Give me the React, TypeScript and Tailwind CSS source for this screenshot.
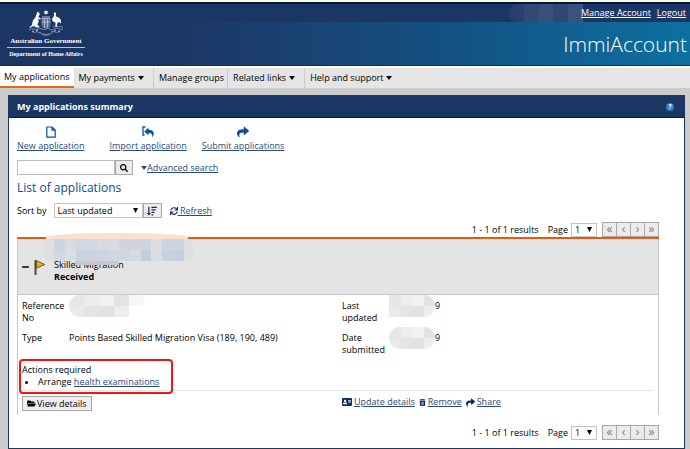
import type { ReactNode } from "react";
import {
    FaAddressCard,
    FaFolderOpen,
    FaMinus,
    FaSearch,
    FaShare,
    FaSortAmountDown,
    FaSync,
    FaTrashAlt,
} from "react-icons/fa";

const menu = [
    { label: "My applications", dropdown: false },
    { label: "My payments", dropdown: true },
    { label: "Manage groups", dropdown: false },
    { label: "Related links", dropdown: true },
    { label: "Help and support", dropdown: true },
];

const pages = [
    { label: "«", title: "First page" },
    { label: "‹", title: "Previous page" },
    { label: "›", title: "Next page" },
    { label: "»", title: "Last page" },
];

const nameTiles = [
    "bg-[#cdd4df]", "bg-[#d8dbe0]", "bg-[#d2d8e1]", "bg-[#d2d8e1]", "bg-[#d6dae1]", "bg-[#d8dbe2]",
    "bg-[#cfd5e0]", "bg-[#cfd5e0]", "bg-[#cbd4e0]", "bg-[#dadde1]", "bg-[#cdd5e1]", "bg-[#cdd5e1]",
    "bg-[#d2d8e1]", "bg-[#dadde1]", "bg-[#c9d2df]", "bg-[#c9d2df]", "bg-[#cbd4e0]", "bg-[#d0d7e1]",
    "bg-[#cfd7e1]", "bg-[#d6dae1]", "bg-[#c3cddd]", "bg-[#dadde1]", "bg-[#c8d1df]", "bg-[#c5cfdd]",
];

const greyTiles = [
    "bg-[#e6e6e8]", "bg-[#ededee]", "bg-[#f1f1f1]", "bg-[#e3e3e6]",
    "bg-[#e9e9e9]", "bg-[#e5e4e5]", "bg-[#e1e1e2]", "bg-[#ededee]",
];

function Caret() {
    return (
        <svg viewBox="0 0 6 4" className="h-1 w-[6px]" aria-hidden="true">
            <path d="M0 0h6L3 4z" fill="currentColor" />
        </svg>
    );
}

function PageIcon() {
    return (
        <svg viewBox="0 0 10 12" className="h-3 w-[10px]" fill="none" stroke="currentColor" strokeWidth="1.2" aria-hidden="true">
            <path d="M.8 1h5.400l3 3v7.200H.8zM6 1v3.200h3.200" />
        </svg>
    );
}

function ImportIcon() {
    return (
        <svg viewBox="0 0 12 12" className="size-3" fill="currentColor" aria-hidden="true">
            <path d="M3.500 1H1v8h1.500" fill="none" stroke="currentColor" strokeWidth="1.300" />
            <path d="M6.500 1.500v2.200c3.300 0 5.300 1.300 5.300 4 0 1.500-.6 2.700-1.500 3.600.4-2.900-.7-4.200-3.800-4.200v2.400L2.300 5.500z" />
        </svg>
    );
}

function Crest() {
    return (
        <svg viewBox="0 0 36 26" className="h-[26px] w-9" fill="#dfe5f0" aria-hidden="true">
            <path d="M18 0l.7 1.4 1.5-.3-.8 1.3.9 1.3-1.6-.1L18 5l-.7-1.4-1.6.1.9-1.3-.8-1.3 1.5.3z" fill="#fff" />
            <path d="M14 6.5h8v1h-8z" opacity=".8" />
            <path d="M13.5 8.5h9v6.500c0 2-2 3.200-4.500 4-2.500-.8-4.500-2-4.500-4z" opacity=".35" />
            <path d="M13.5 8.5h9M13.5 12h9M16.5 8.5v9M19.5 8.5v9" fill="none" stroke="#d5dcea" strokeWidth=".6" />
            {/* kangaroo */}
            <path
                d="M9.500 1.500l.8 1.200.9-1v2l.9 1.100-1.300.6-.2 1.800 2.200 1.300-.3 1-2.200-.8.400 3.300-1.400 2.500 2.200 2.200-.3.800-4-.500-.3-1.300-2.300.2-1.800 1.800-1-.400 2.400-2.800c0-3 .8-5 2.900-6.600z"
                fill="#fff"
            />
            {/* emu */}
            <path
                d="M25.500 3.200l1.500-.9 1 .8-.2 3.400c3 .4 4.700 2 5.200 4.200l.2 3-1.800-1.700-2 .9-.6 3.300 1.400.8h-3l.4-4.200-2.600-1.200c-1.400-1.600-1.200-3.600.8-5l.4-2.600z"
                fill="#fff"
            />
            <g fill="none" stroke="#8c9cbd" strokeWidth=".8">
                <path d="M3 17c3-2 5 2 8 0M1 20c3-3 6 1 9-1s5 2 8 0 5 3 8 0 6 2 9 0" />
                <path d="M25 17c2-2 5 1 8-1M6 23c3-3 5 1 7-1M23 22c3-2 5 2 7 0" />
                <path d="M11 22.5c4 2.5 10 2.5 14 0M14 24.5c3 1 5 1 8 0" />
            </g>
            <g fill="#a3b0cb">
                <circle cx="2" cy="17" r=".8" />
                <circle cx="5" cy="21.5" r="1" />
                <circle cx="9" cy="20.5" r="1" />
                <circle cx="27" cy="20.5" r="1" />
                <circle cx="31" cy="21.5" r="1" />
                <circle cx="34" cy="17" r=".8" />
            </g>
        </svg>
    );
}

function Flag() {
    return (
        <svg viewBox="0 0 12 16" className="h-4 w-3" aria-hidden="true">
            <path d="M1.5 1v15" stroke="#554a36" strokeWidth="2" />
            <path d="M2.5 1.7L10.5 5.5 2.5 9.3z" fill="#f7a823" stroke="#6b5524" strokeWidth="1" />
        </svg>
    );
}

type SelectProps = { id: string; value: string; className: string };

function Select({ id, value, className }: SelectProps) {
    return (
        <span className={`relative flex items-center ${className}`}>
            <select id={id} className="h-full w-full appearance-none border border-[#c4c4c4] bg-white pl-[3px]">
                <option>{value}</option>
            </select>
            <svg viewBox="0 0 6 6" className="pointer-events-none absolute right-[5px] size-[5px]" aria-hidden="true">
                <path d="M0 0h6L3 6z" />
            </svg>
        </span>
    );
}

function Pagination({ id }: { id: string }) {
    return (
        <div className="flex h-[15px] items-center justify-end">
            <span className="mr-[9px]">1 - 1 of 1 results</span>
            <label htmlFor={id} className="mr-[3px]">Page</label>
            <Select id={id} value="1" className="mr-[5px] h-[14px] w-[26px]" />
            <div className="flex">
                {pages.map((page) => (
                    <button
                        key={page.title}
                        title={page.title}
                        className="flex h-[15px] w-[15px] items-center justify-center border border-[#a8a8a8] bg-[#ebebeb] pb-[2px] text-[12px] leading-none text-[#777] not-first:-ml-px"
                    >
                        {page.label}
                    </button>
                ))}
            </div>
        </div>
    );
}

function GreyPatch({ className }: { className: string }) {
    return (
        <span className={`grid h-[22px] grid-cols-4 overflow-hidden ${className}`}>
            {greyTiles.map((tile, i) => (
                <span key={i} className={tile} />
            ))}
        </span>
    );
}

function Shortcut({ icon, children }: { icon: ReactNode; children: string }) {
    return (
        <a href="#" className="flex flex-col items-center gap-[2px] text-[#2a4a7c]">
            <span className="flex h-3 items-center text-[#0b4ea2]">{icon}</span>
            <span className="underline">{children}</span>
        </a>
    );
}

function Header() {
    return (
        <header className="relative flex h-16 flex-col border-t-2 border-b border-[#00145c] border-b-[#04306c] bg-[#1c3664] text-white">
            <div className="flex h-[18px] items-center justify-end gap-[6px] pr-1 font-medium">
                <span className="-mr-2 grid h-[18px] w-[74px] grid-cols-5 overflow-hidden rounded-l-full rounded-r-lg">
                    <span className="bg-[#27406c]" />
                    <span className="bg-[#314a73]" />
                    <span className="bg-[#3a5079]" />
                    <span className="bg-[#2f4873]" />
                    <span className="bg-[#3b527c]" />
                </span>
                <a href="#" className="underline">Manage Account</a>
                <a href="#" className="underline">Logout</a>
            </div>
            <div className="flex flex-1 items-center justify-end bg-linear-to-r from-[#1c3664] from-25% via-[#125182] via-65% to-[#0d70a0] pr-[3px]">
                <h1 className="text-[21px] leading-6 font-light">ImmiAccount</h1>
            </div>
            <div className="absolute top-[6px] left-[7px] flex flex-col items-center font-['Liberation_Serif'] text-[7px] leading-[8px] font-bold">
                <Crest />
                <span className="mt-px w-[78px] border-b border-white/70 pb-[2px] text-center whitespace-nowrap">Australian Government</span>
                <span className="mt-[2px] text-[6px] whitespace-nowrap">Department of Home Affairs</span>
            </div>
        </header>
    );
}

function Application() {
    return (
        <article className="border-t-2 border-[#e8590c]">
            <div className="border-x border-[#c9c9c9] pb-1">
                <div className="relative flex h-14 items-center gap-[5px] border-b border-[#c9c9c9] bg-[#e4e4e4] pl-1">
                    <button aria-label="Collapse">
                        <FaMinus className="h-2 w-[7px]" />
                    </button>
                    <Flag />
                    <div className="ml-[3px] pt-2">
                        <p>Skilled Migration</p>
                        <p className="font-bold">Received</p>
                    </div>
                    <span className="absolute -top-[6px] left-7 h-2 w-[142px] rounded-t-[50%] bg-[#fbdfcf]" />
                    <span className="absolute top-0 left-[25px] h-[22px] w-[151px] rounded-b-xl rounded-tr-xl bg-[#dddfe3]" />
                    <span className="absolute top-0 left-9 grid h-[22px] w-[130px] grid-cols-12">
                        {nameTiles.map((tile, i) => (
                            <span key={i} className={tile} />
                        ))}
                    </span>
                    <span className="absolute top-[22px] left-[57px] h-1 w-11 bg-[#c8c8c8]" />
                </div>
                <div className="px-1">
                    <div className="grid grid-cols-2">
                        <dl className="grid grid-cols-[47px_1fr] grid-rows-[32px_32px]">
                            <dt className="w-11 pt-[5px]">Reference No</dt>
                            <dd className="flex">
                                <GreyPatch className="w-[60px] rounded-l-xl" />
                                <span className="h-[11px] w-4 rounded-r-lg bg-[#f6f6f7]" />
                            </dd>
                            <dt className="pt-[5px]">Type</dt>
                            <dd className="pt-[5px] whitespace-nowrap">Points Based Skilled Migration Visa (189, 190, 489)</dd>
                        </dl>
                        <dl className="grid grid-cols-[47px_1fr] grid-rows-[32px_32px] pl-1">
                            <dt className="pt-[5px]">Last<br />updated</dt>
                            <dd className="flex">
                                <GreyPatch className="w-[46px] rounded-r-xl" />
                                <span className="pt-[5px]">9</span>
                            </dd>
                            <dt className="pt-[5px]">Date<br />submitted</dt>
                            <dd className="flex">
                                <GreyPatch className="w-[46px] rounded-xl" />
                                <span className="pt-[5px]">9</span>
                            </dd>
                        </dl>
                    </div>
                    <section className="relative h-8 border-b border-[#e6e6e6]">
                        <h3 className="pt-[5px]">Actions required</h3>
                        <ul className="list-disc pl-4">
                            <li>Arrange <a href="#" className="text-[#2a4a7c] underline">health examinations</a></li>
                        </ul>
                        <span className="absolute -left-[3px] top-0 h-[35px] w-[154px] rounded-[4px] border-2 border-[#f4150d]" />
                    </section>
                    <div className="grid grid-cols-2 pt-[5px]">
                        <div>
                            <button className="flex h-[15px] items-center gap-px border border-[#a8a8a8] bg-[#efefef] px-1">
                                <FaFolderOpen className="size-[9px]" />View details
                            </button>
                        </div>
                        <div className="flex h-3 items-center gap-1 pl-1 text-[#2a4a7c]">
                            <a href="#" className="flex items-center gap-[2px] underline"><FaAddressCard className="size-[10px] text-[#0f2a5c]" />Update details</a>
                            <a href="#" className="flex items-center gap-[2px] underline"><FaTrashAlt className="size-[7px] text-[#0f2a5c]" />Remove</a>
                            <a href="#" className="flex items-center gap-[2px] underline"><FaShare className="size-[9px] text-[#0f2a5c]" />Share</a>
                        </div>
                    </div>
                </div>
            </div>
        </article>
    );
}

export default function App() {
    return (
        <div className="bg-[#cbcbcb] font-['Open_Sans',sans-serif] text-[9px] leading-3 text-black">
            <div className="h-[2px] bg-[#ffffcc]" />
            <Header />
            <nav className="flex h-[22px] border-t-2 border-white bg-[#e5e5e5]">
                {menu.map((item, i) => (
                    <a
                        key={item.label}
                        href="#"
                        className={
                            i === 0
                                ? "flex items-center border-b-2 border-[#e8690c] bg-white px-1"
                                : "flex items-center border-r border-[#cbcbcb] pr-[3px] pl-[5px] last:border-r-0"
                        }
                    >
                        {item.label}
                        {item.dropdown && <span className="mr-[6px] ml-[3px]"><Caret /></span>}
                    </a>
                ))}
            </nav>
            <main className="pt-[7px] pr-[5px] pb-px pl-2">
                <section className="border border-[#1c3664] bg-white">
                    <div className="flex h-[22px] items-center justify-between border-b border-[#00145c] bg-[#1c3664] pr-[10px] pl-2 text-white">
                        <h2 className="font-bold">My applications summary</h2>
                        <button
                            aria-label="Help"
                            className="flex size-2 items-center justify-center rounded-full bg-[#2f7fd0] text-[7px] leading-none font-bold"
                        >
                            ?
                        </button>
                    </div>
                    <div className="pt-2 pr-[25px] pb-2 pl-2">
                        <div className="flex">
                            <Shortcut icon={<PageIcon />}>New application</Shortcut>
                            <span className="w-[25px]" />
                            <Shortcut icon={<ImportIcon />}>Import application</Shortcut>
                            <span className="w-[15px]" />
                            <Shortcut icon={<FaShare className="size-3" />}>Submit applications</Shortcut>
                        </div>
                        <form className="mt-2 flex h-[15px] items-center">
                            <input aria-label="Search applications" className="h-full w-[98px] border border-[#bdbdbd] bg-white" />
                            <button type="button" aria-label="Search" className="flex h-full w-[18px] items-center justify-center border border-[#a8a8a8] bg-[#ebebeb]">
                                <FaSearch className="size-2" />
                            </button>
                            <a href="#" className="ml-2 flex items-center text-[#2a4a7c] underline"><Caret />Advanced search</a>
                        </form>
                        <h2 className="mt-[5px] text-[12px] leading-4 text-[#0b4a90]">List of applications</h2>
                        <div className="mt-[7px] flex h-[15px] items-center">
                            <label htmlFor="sort" className="mr-[7px]">Sort by</label>
                            <Select id="sort" value="Last updated" className="h-full w-[89px]" />
                            <button aria-label="Sort order" className="flex h-full w-[19px] items-center justify-center border border-[#a8a8a8] bg-[#ebebeb]">
                                <FaSortAmountDown className="size-[10px] text-[#1c2c4c]" />
                            </button>
                            <a href="#" className="ml-2 flex items-center text-[#2a4a7c] underline">
                                <FaSync className="size-2 text-[#0f2a5c]" />
                                <span className="whitespace-pre"> Refresh</span>
                            </a>
                        </div>
                        <div className="mt-1">
                            <Pagination id="page-top" />
                        </div>
                        <Application />
                        <div className="mt-[10px]">
                            <Pagination id="page-bottom" />
                        </div>
                    </div>
                </section>
            </main>
        </div>
    );
}
